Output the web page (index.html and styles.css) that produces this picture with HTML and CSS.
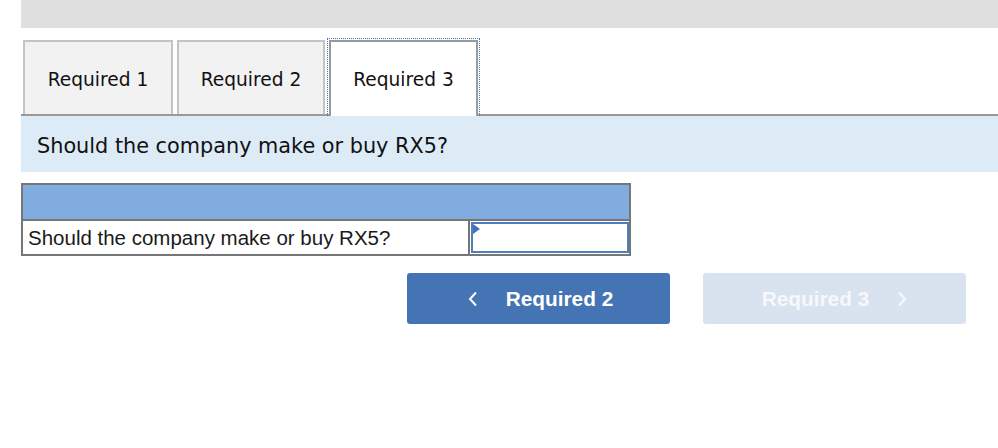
FILE: index.html
```html
<!DOCTYPE html>
<html>
<head>
<meta charset="utf-8">
<link rel="stylesheet" href="styles.css">
</head>
<body>
<div class="page">
  <div class="topbar"></div>
  <div class="tabs">
    <div class="tab">Required 1</div>
    <div class="tab">Required 2</div>
    <div class="tab active">Required 3</div>
  </div>
  <div class="question">Should the company make or buy RX5?</div>
  <div class="grid">
    <div class="grid-head"></div>
    <div class="grid-row">
      <div class="cell-label">Should the company make or buy RX5?</div>
      <div class="cell-input"><div class="input"><span class="marker"></span></div></div>
    </div>
  </div>
  <div class="nav">
    <div class="btn primary">
      <svg class="chev" width="10" height="16" viewBox="0 0 10 16"><polyline points="8,1.5 2,8 8,14.5" fill="none" stroke="#fff" stroke-width="2"/></svg>
      <span>Required 2</span>
    </div>
    <div class="btn disabled">
      <span>Required 3</span>
      <svg class="chev" width="10" height="16" viewBox="0 0 10 16"><polyline points="2,1.5 8,8 2,14.5" fill="none" stroke="#fff" stroke-width="2"/></svg>
    </div>
  </div>
</div>
</body>
</html>
```

FILE: styles.css
```css
html, body {
  margin: 0;
  padding: 0;
  background: #fff;
}
.page {
  padding-left: 21px;
  width: 977px;
}
.topbar {
  height: 28px;
  background: #dfdfdf;
}
.tabs {
  display: flex;
  align-items: flex-end;
  gap: 4px;
  margin-top: 12px;
  padding-left: 2px;
  border-bottom: 2px solid #999;
  height: 74px;
}
.tab {
  box-sizing: border-box;
  height: 74px;
  width: 150px;
  border: 2px solid #c4c4c4;
  border-bottom: none;
  background: #f2f2f2;
  font-family: "DejaVu Sans", Verdana, sans-serif;
  font-size: 18.6px;
  color: #111;
  display: flex;
  align-items: center;
  justify-content: center;
  padding-top: 3px;
}
.tab:nth-child(2) {
  width: 148px;
}
.tab.active {
  position: relative;
  width: 149px;
  height: 76px;
  margin-bottom: -2px;
  background: #fff;
  border-color: #999;
  padding-top: 1px;
}
.tab.active::after {
  content: "";
  position: absolute;
  left: -4px;
  right: -4px;
  top: -4px;
  bottom: 0;
  border: 1px dotted #3e73b8;
  border-bottom: none;
}
.question {
  height: 56px;
  background: #ddebf7;
  padding-left: 16px;
  display: flex;
  align-items: center;
  font-family: "DejaVu Sans", Verdana, sans-serif;
  font-size: 20.8px;
  color: #111;
  padding-top: 3px;
  box-sizing: border-box;
}
.grid {
  margin-top: 11px;
  width: 610px;
  box-sizing: border-box;
  border: 2px solid #767676;
}
.grid-head {
  height: 34px;
  background: #80acdf;
}
.grid-row {
  display: flex;
  height: 33px;
  border-top: 2px solid #767676;
}
.cell-label {
  width: 445px;
  padding-left: 5px;
  box-sizing: border-box;
  font-family: "Liberation Sans", Arial, sans-serif;
  font-size: 20.5px;
  color: #1a1a1a;
  display: flex;
  align-items: center;
}
.cell-input {
  flex: 1;
  border-left: 2px solid #767676;
  padding: 1px 0 1px 1px;
  box-sizing: border-box;
  display: flex;
}
.input {
  flex: 1;
  position: relative;
  border: 2px solid #4d7fc0;
  background: #fff;
}
.marker {
  position: absolute;
  left: 0;
  top: 0;
  width: 0;
  height: 0;
  border-top: 5px solid transparent;
  border-bottom: 5px solid transparent;
  border-left: 7px solid #4472b4;
}
.nav {
  display: flex;
  gap: 33px;
  margin-top: 17px;
  padding-left: 386px;
}
.btn {
  width: 263px;
  height: 51px;
  border-radius: 3px;
  display: flex;
  align-items: center;
  justify-content: center;
  gap: 28px;
  font-family: "Liberation Sans", Arial, sans-serif;
  font-weight: bold;
  font-size: 20.8px;
  color: #fff;
}
.btn.primary {
  background: #4574b4;
  padding-left: 4px;
  box-sizing: border-box;
}
.btn.disabled {
  background: #d9e3ef;
  color: #f6f8fb;
}
.btn.disabled .chev polyline {
  stroke: #f6f8fb;
}
.chev {
  display: block;
}
```
